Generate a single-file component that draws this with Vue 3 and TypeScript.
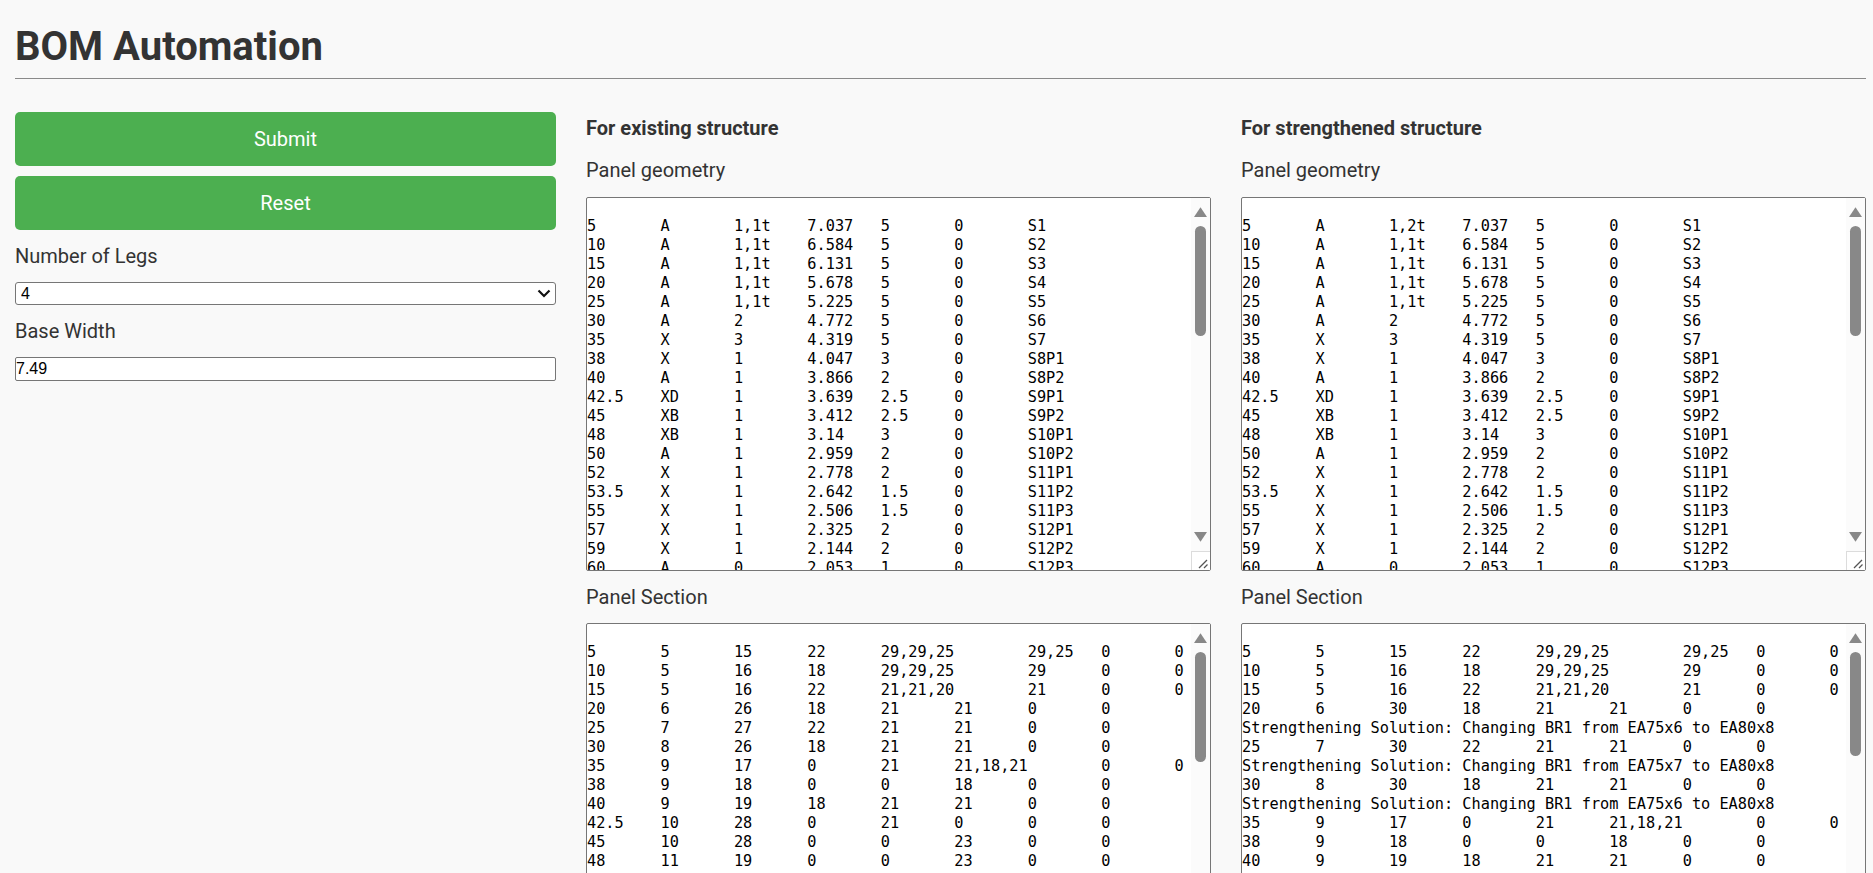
<script setup lang="ts">
interface Box {
  label: string
  text: string
  thumb: number
}
interface Column {
  title: string
  boxes: Box[]
}

const rows = (lines: string[][]): string =>
  '\n' + lines.map((l) => l.join('\t')).join('\n')

const geometry = (first: string): string =>
  rows([
    ['5', 'A', first, '7.037', '5', '0', 'S1'],
    ['10', 'A', '1,1t', '6.584', '5', '0', 'S2'],
    ['15', 'A', '1,1t', '6.131', '5', '0', 'S3'],
    ['20', 'A', '1,1t', '5.678', '5', '0', 'S4'],
    ['25', 'A', '1,1t', '5.225', '5', '0', 'S5'],
    ['30', 'A', '2', '4.772', '5', '0', 'S6'],
    ['35', 'X', '3', '4.319', '5', '0', 'S7'],
    ['38', 'X', '1', '4.047', '3', '0', 'S8P1'],
    ['40', 'A', '1', '3.866', '2', '0', 'S8P2'],
    ['42.5', 'XD', '1', '3.639', '2.5', '0', 'S9P1'],
    ['45', 'XB', '1', '3.412', '2.5', '0', 'S9P2'],
    ['48', 'XB', '1', '3.14', '3', '0', 'S10P1'],
    ['50', 'A', '1', '2.959', '2', '0', 'S10P2'],
    ['52', 'X', '1', '2.778', '2', '0', 'S11P1'],
    ['53.5', 'X', '1', '2.642', '1.5', '0', 'S11P2'],
    ['55', 'X', '1', '2.506', '1.5', '0', 'S11P3'],
    ['57', 'X', '1', '2.325', '2', '0', 'S12P1'],
    ['59', 'X', '1', '2.144', '2', '0', 'S12P2'],
    ['60', 'A', '0', '2.053', '1', '0', 'S12P3'],
  ])

const sectionExisting = rows([
  ['5', '5', '15', '22', '29,29,25', '29,25', '0', '0'],
  ['10', '5', '16', '18', '29,29,25', '29', '0', '0'],
  ['15', '5', '16', '22', '21,21,20', '21', '0', '0'],
  ['20', '6', '26', '18', '21', '21', '0', '0'],
  ['25', '7', '27', '22', '21', '21', '0', '0'],
  ['30', '8', '26', '18', '21', '21', '0', '0'],
  ['35', '9', '17', '0', '21', '21,18,21', '0', '0'],
  ['38', '9', '18', '0', '0', '18', '0', '0'],
  ['40', '9', '19', '18', '21', '21', '0', '0'],
  ['42.5', '10', '28', '0', '21', '0', '0', '0'],
  ['45', '10', '28', '0', '0', '23', '0', '0'],
  ['48', '11', '19', '0', '0', '23', '0', '0'],
])

const sectionStrengthened = rows([
  ['5', '5', '15', '22', '29,29,25', '29,25', '0', '0'],
  ['10', '5', '16', '18', '29,29,25', '29', '0', '0'],
  ['15', '5', '16', '22', '21,21,20', '21', '0', '0'],
  ['20', '6', '30', '18', '21', '21', '0', '0'],
  ['Strengthening Solution: Changing BR1 from EA75x6 to EA80x8'],
  ['25', '7', '30', '22', '21', '21', '0', '0'],
  ['Strengthening Solution: Changing BR1 from EA75x7 to EA80x8'],
  ['30', '8', '30', '18', '21', '21', '0', '0'],
  ['Strengthening Solution: Changing BR1 from EA75x6 to EA80x8'],
  ['35', '9', '17', '0', '21', '21,18,21', '0', '0'],
  ['38', '9', '18', '0', '0', '18', '0', '0'],
  ['40', '9', '19', '18', '21', '21', '0', '0'],
])

const columns: Column[] = [
  {
    title: 'For existing structure',
    boxes: [
      { label: 'Panel geometry', text: geometry('1,1t'), thumb: 110 },
      { label: 'Panel Section', text: sectionExisting, thumb: 110 },
    ],
  },
  {
    title: 'For strengthened structure',
    boxes: [
      { label: 'Panel geometry', text: geometry('1,2t'), thumb: 110 },
      { label: 'Panel Section', text: sectionStrengthened, thumb: 104 },
    ],
  },
]
</script>

<template>
  <div class="page">
    <h1 class="title">BOM Automation</h1>
    <hr class="rule" />
    <div class="layout">
      <form class="controls" @submit.prevent>
        <button class="btn" type="submit">Submit</button>
        <button class="btn" type="reset">Reset</button>
        <label class="field-label" for="legs">Number of Legs</label>
        <div class="select-wrap">
          <select id="legs" class="select">
            <option>4</option>
          </select>
          <svg class="chevron" width="14" height="9" viewBox="0 0 14 9">
            <path d="M1.5 1.5 L7 7 L12.5 1.5" fill="none" stroke="#111" stroke-width="2.2" />
          </svg>
        </div>
        <label class="field-label" for="base">Base Width</label>
        <input id="base" class="input" type="text" value="7.49" />
      </form>

      <section v-for="col in columns" :key="col.title" class="column">
        <h3 class="col-title">{{ col.title }}</h3>
        <template v-for="box in col.boxes" :key="box.label">
          <label class="field-label">{{ box.label }}</label>
          <div class="area-wrap">
            <textarea class="area" wrap="off" spellcheck="false" :value="box.text"></textarea>
            <div class="bar">
              <svg class="arrow arrow-up" width="13" height="10" viewBox="0 0 13 10">
                <path d="M6.5 0.2 L13 10 L0 10 Z" fill="#888" />
              </svg>
              <div class="thumb" :style="{ height: box.thumb + 'px' }"></div>
              <svg class="arrow arrow-down" width="13" height="10" viewBox="0 0 13 10">
                <path d="M0 0 L13 0 L6.5 9.8 Z" fill="#888" />
              </svg>
            </div>
            <div class="grip">
              <svg width="19" height="19" viewBox="0 0 19 19">
                <path d="M8 17 L16 9 M13 17 L16.5 13.5" stroke="#555" stroke-width="1.3" fill="none" />
              </svg>
            </div>
          </div>
        </template>
      </section>
    </div>
  </div>
</template>

<style>
html,
body {
  margin: 0;
  height: 100%;
  overflow: hidden;
  background: #f9f9f9;
}
</style>

<style scoped>
.page {
  padding: 0 7px 0 15px;
  color: #333;
  font-family: Roboto, "Liberation Sans", sans-serif;
}
.title {
  margin: 0;
  padding-top: 23px;
  font-size: 40px;
  line-height: 47px;
  font-weight: 700;
}
.rule {
  margin: 8px 0 33px;
  border: 0;
  height: 1px;
  background: #8a8a8a;
}
.layout {
  display: grid;
  grid-template-columns: 541px 1fr 1fr;
  column-gap: 30px;
  align-items: start;
}
.controls {
  display: flex;
  flex-direction: column;
}
.btn {
  height: 54px;
  margin-bottom: 10px;
  border: 0;
  border-radius: 5px;
  background: #4caf50;
  color: #fff;
  font-family: inherit;
  font-size: 20px;
}
.btn + .btn {
  margin-bottom: 14px;
}
.field-label {
  display: block;
  height: 24px;
  font-size: 20px;
  line-height: 24px;
  margin-bottom: 14px;
}
.select-wrap {
  position: relative;
  height: 23px;
  margin-bottom: 14px;
}
.select {
  display: block;
  width: 100%;
  height: 100%;
  padding: 0 0 0 5px;
  box-sizing: border-box;
  appearance: none;
  border: 1px solid #767676;
  border-radius: 3px;
  background: #fff;
  color: #000;
  font-family: "Liberation Sans", sans-serif;
  font-size: 16px;
}
.chevron {
  position: absolute;
  right: 5px;
  top: 7px;
  pointer-events: none;
}
.input {
  height: 24px;
  padding: 0;
  box-sizing: border-box;
  border: 1px solid #767676;
  border-radius: 2px;
  background: #fff;
  color: #000;
  font-family: "Liberation Sans", sans-serif;
  font-size: 16px;
}
.col-title {
  margin: 4px 0 18px;
  font-size: 20px;
  line-height: 24px;
  font-weight: 700;
}
.col-title + .field-label {
  margin-bottom: 15px;
}
.area-wrap {
  position: relative;
  height: 374px;
  margin-bottom: 14px;
}
.area {
  display: block;
  width: 100%;
  height: 100%;
  box-sizing: border-box;
  margin: 0;
  padding: 0;
  border: 1px solid #767676;
  border-radius: 2px;
  background: #fff;
  color: #000;
  font-family: "DejaVu Sans Mono", "Liberation Mono", monospace;
  font-size: 15.26px;
  line-height: 19px;
  overflow: hidden;
  resize: none;
  white-space: pre;
  tab-size: 8;
}
.bar {
  position: absolute;
  top: 1px;
  right: 1px;
  bottom: 1px;
  width: 19px;
  background: #fbfbfb;
}
.arrow {
  position: absolute;
  left: 3px;
}
.arrow-up {
  top: 9px;
}
.arrow-down {
  bottom: 28px;
}
.thumb {
  position: absolute;
  top: 28px;
  left: 4px;
  width: 11px;
  border-radius: 6px;
  background: #888;
}
.grip {
  position: absolute;
  right: 1px;
  bottom: 1px;
  width: 19px;
  height: 19px;
  box-sizing: border-box;
  background: #fff;
  border-top: 1px solid #dcdcdc;
  border-left: 1px solid #dcdcdc;
  overflow: hidden;
}
.grip svg {
  display: block;
  margin: -1px 0 0 -1px;
}
</style>
